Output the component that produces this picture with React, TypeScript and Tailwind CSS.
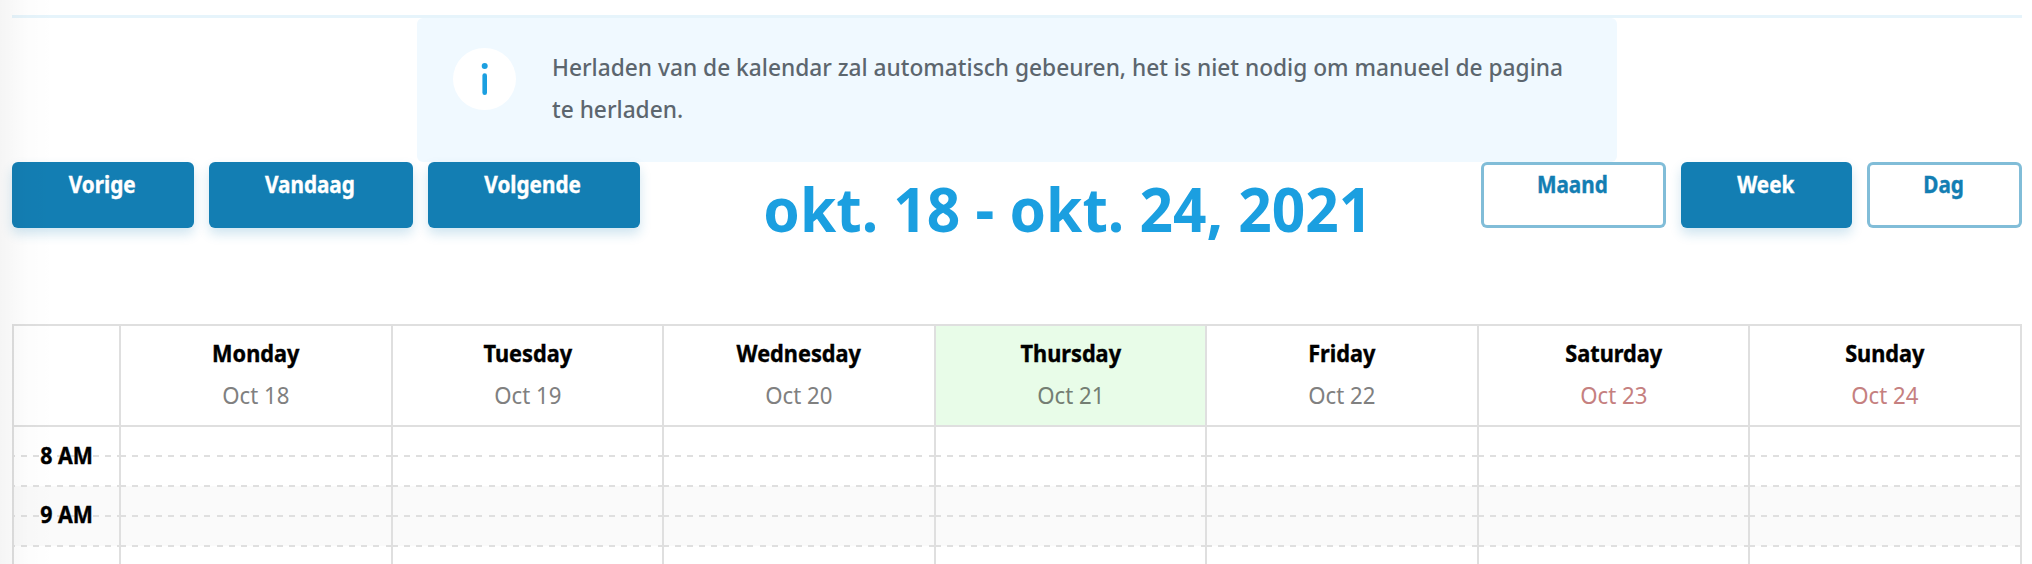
const days = [
  { name: 'Monday', date: 'Oct 18', tone: 'text-[#808080]', cell: '' },
  { name: 'Tuesday', date: 'Oct 19', tone: 'text-[#808080]', cell: '' },
  { name: 'Wednesday', date: 'Oct 20', tone: 'text-[#808080]', cell: '' },
  { name: 'Thursday', date: 'Oct 21', tone: 'text-[#747e73]', cell: 'bg-[#e8fce8]' },
  { name: 'Friday', date: 'Oct 22', tone: 'text-[#808080]', cell: '' },
  { name: 'Saturday', date: 'Oct 23', tone: 'text-[#c58080]', cell: '' },
  { name: 'Sunday', date: 'Oct 24', tone: 'text-[#c58080]', cell: '' },
];

const slots = [
  { label: '8 AM', bg: '' },
  { label: '', bg: '' },
  { label: '9 AM', bg: 'bg-[#fafafa]' },
  { label: '', bg: 'bg-[#fafafa]' },
  { label: '', bg: '' },
];

const base = 'flex h-[66px] justify-center rounded-md pt-1 pr-[2px] text-[23px] leading-[36px] font-bold whitespace-nowrap';
const solid = 'bg-[#137eb3] text-white shadow-[0_6px_12px_rgba(19,126,179,0.2)]';
const outline = 'text-[#137eb3] shadow-[inset_0_0_0_3px_#81bdd8]';
const label = 'scale-x-[0.9] [-webkit-text-stroke:0.4px_currentColor]';

// Dashed rules straddle the row boundary: one pixel in each neighbouring row.
const dashEdges = 'bg-no-repeat bg-origin-border [background-size:100%_1px] [background-position:0_0,0_100%]';
const hourDash =
  'bg-[repeating-linear-gradient(90deg,#dfdfdf_0_2px,transparent_2px_8px,#dfdfdf_8px_12px),repeating-linear-gradient(90deg,#dfdfdf_0_2px,transparent_2px_8px,#dfdfdf_8px_12px)]';
const dayDash =
  'bg-[repeating-linear-gradient(90deg,#dfdfdf_0_6px,transparent_6px_12.07px),repeating-linear-gradient(90deg,#dfdfdf_0_6px,transparent_6px_12.07px)]';

export default function App() {
  return (
    <div className="relative h-[564px] w-[2032px] overflow-hidden bg-white pr-[10px] pl-3 pt-[15px] font-['Noto_Sans',sans-serif]">
      <div className="h-[3px] bg-[#e6f4fb]" />
      <div className="ml-[405px] flex h-[144px] w-[1200px] rounded-md bg-[#f0f9ff] pt-[30px] pl-9">
        <svg className="h-[62px] w-[63px] shrink-0" viewBox="0 0 63 62">
          <ellipse cx="31.5" cy="31" rx="31.5" ry="31" fill="#fff" />
          <circle cx="31.7" cy="18" r="3" fill="#1b9fe0" />
          <rect x="29.4" y="25.3" width="4.6" height="21.7" rx="2.3" fill="#1b9fe0" />
        </svg>
        <p className="mt-[-2px] ml-[36px] origin-left scale-x-[0.946] text-[24px] leading-[42px] font-medium whitespace-nowrap text-[#5c666e]">
          <span className="block">Herladen van de kalendar zal automatisch gebeuren, het is niet nodig om manueel de pagina</span>
          <span className="block">te herladen.</span>
        </p>
      </div>

      <div className="flex h-[162px] justify-between">
        <div className="flex gap-[15px]">
          <button className={`${base} ${solid} w-[182px]`}><span className={label}>Vorige</span></button>
          <button className={`${base} ${solid} w-[204px]`}><span className={label}>Vandaag</span></button>
          <button className={`${base} ${solid} w-[212px]`}><span className={label}>Volgende</span></button>
        </div>
        <h1 className="mt-[6px] ml-[14px] scale-x-[0.952] text-[61.5px] leading-[80px] font-bold whitespace-nowrap text-[#1b9fe0]">
          okt. 18 - okt. 24, 2021
        </h1>
        <div className="flex gap-[15px]">
          <button className={`${base} ${outline} w-[185px]`}><span className={label}>Maand</span></button>
          <button className={`${base} ${solid} w-[171px]`}><span className={label}>Week</span></button>
          <button className={`${base} ${outline} w-[155px]`}><span className={label}>Dag</span></button>
        </div>
      </div>

      <table className="w-[2010px] table-fixed border-collapse border-2 border-[#dfdfdf]">
        <colgroup>
          <col className="w-[107px]" />
          {days.map((d) => <col key={d.name} />)}
        </colgroup>
        <thead>
          <tr className="h-[101px]">
            <th className="border-2 border-[#dfdfdf]" />
            {days.map((d) => (
              <th key={d.name} className={`border-2 border-[#dfdfdf] p-0 pb-[3px] text-center text-[24px] leading-[42px] ${d.cell}`}>
                <div className="scale-x-[0.905] font-bold text-black [-webkit-text-stroke:0.4px_currentColor]">{d.name}</div>
                <div className={`scale-x-[0.925] font-normal ${d.tone}`}>{d.date}</div>
              </th>
            ))}
          </tr>
        </thead>
        <tbody>
          {slots.map((s, i) => (
            <tr key={i} className={`h-[30px] ${s.bg}`}>
              <td className={`border-x-2 border-[#dfdfdf] p-0 text-center ${dashEdges} ${hourDash}`}>
                {s.label && (
                  <div className="relative h-0">
                    <span className="absolute inset-x-0 top-[-5px] scale-x-[0.89] text-[24px] leading-[36px] font-bold text-black [-webkit-text-stroke:0.4px_currentColor]">{s.label}</span>
                  </div>
                )}
              </td>
              {days.map((d) => (
                <td key={d.name} className={`border-x-2 border-[#dfdfdf] p-0 ${dashEdges} ${dayDash}`} />
              ))}
            </tr>
          ))}
        </tbody>
      </table>
      <div className="pointer-events-none absolute inset-y-0 left-0 w-[54px] bg-linear-to-r from-black/4 via-black/1 to-transparent" />
    </div>
  );
}
